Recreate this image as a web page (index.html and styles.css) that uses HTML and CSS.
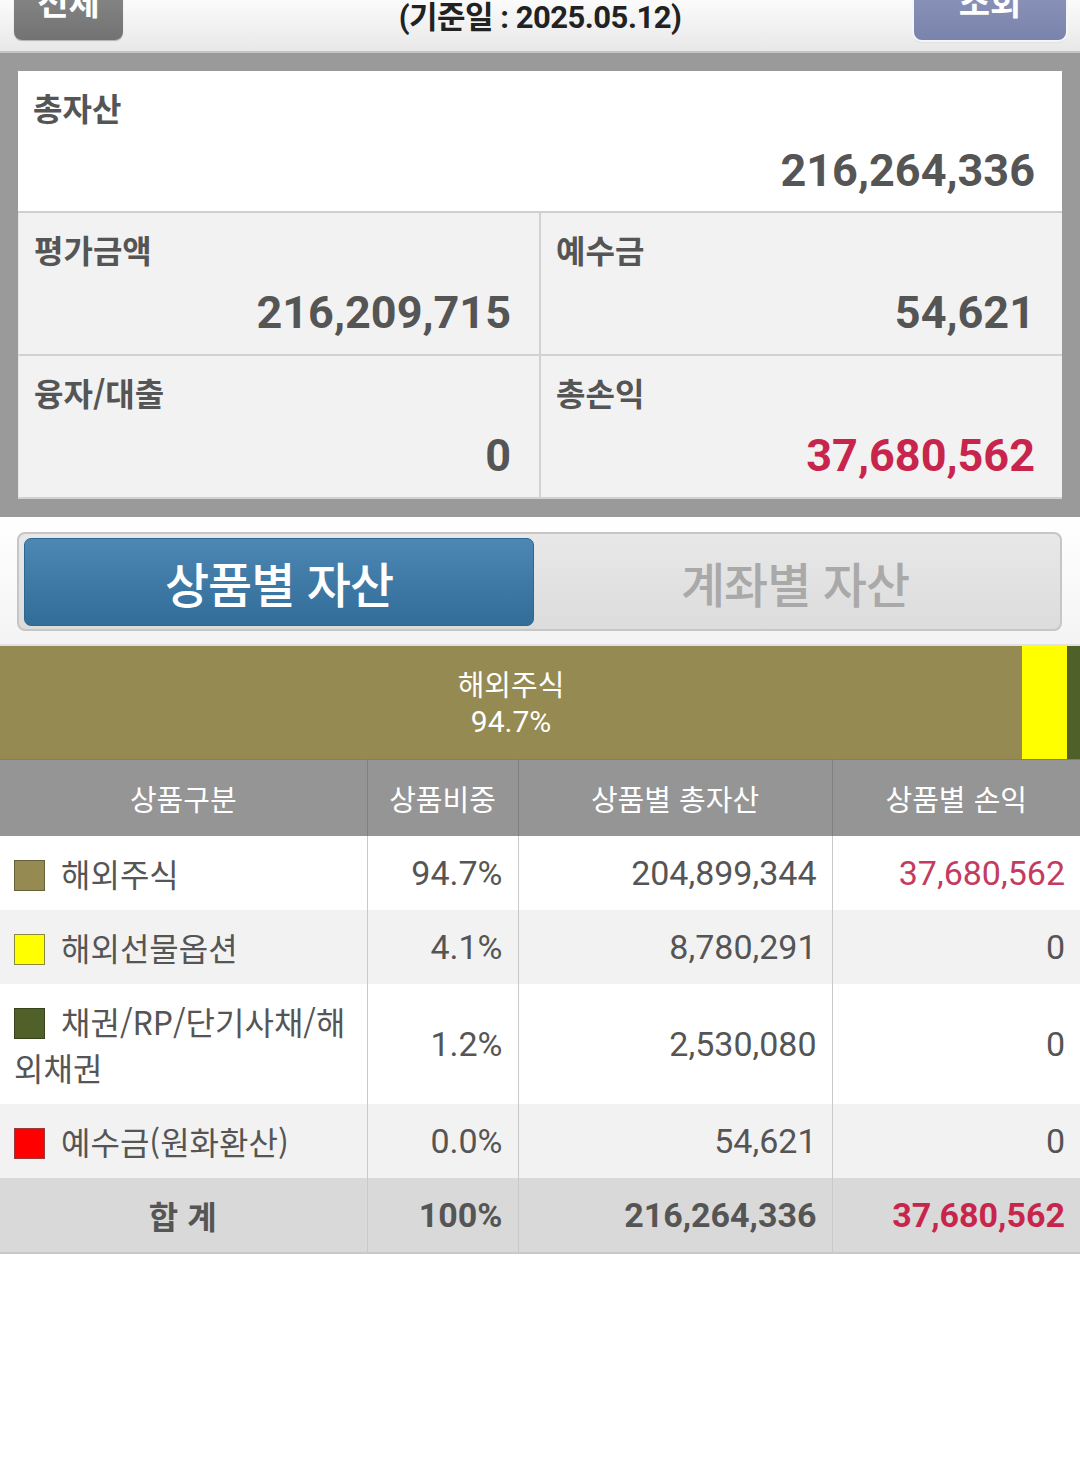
FILE: index.html
```html
<!DOCTYPE html>
<html lang="ko">
<head>
<meta charset="utf-8">
<title>자산현황</title>
<link rel="stylesheet" href="styles.css">
</head>
<body>
<div class="top-bar">
  <div class="btn btn-left"><span>전체</span></div>
  <div class="date">(기준일 : 2025.05.12)</div>
  <div class="btn btn-right"><span>조회</span></div>
</div>

<div class="summary-wrap">
  <div class="summary">
    <div class="total">
      <div class="label">총자산</div>
      <div class="value">216,264,336</div>
    </div>
    <div class="grid">
      <div class="cell cell-left">
        <div class="label">평가금액</div>
        <div class="value">216,209,715</div>
      </div>
      <div class="cell cell-right">
        <div class="label">예수금</div>
        <div class="value">54,621</div>
      </div>
      <div class="cell cell-left">
        <div class="label">융자/대출</div>
        <div class="value">0</div>
      </div>
      <div class="cell cell-right">
        <div class="label">총손익</div>
        <div class="value red">37,680,562</div>
      </div>
    </div>
  </div>
</div>

<div class="tab-wrap">
  <div class="tabs">
    <div class="tab tab-active">상품별 자산</div>
    <div class="tab tab-idle">계좌별 자산</div>
  </div>
</div>

<div class="bar">
  <div class="seg seg-olive" style="width:94.63%">
    <div class="seg-name">해외주식</div>
    <div class="seg-pct">94.7%</div>
  </div>
  <div class="seg seg-yellow" style="width:4.17%"></div>
  <div class="seg seg-green" style="width:1.2%"></div>
</div>

<table class="assets">
  <colgroup>
    <col class="c1"><col class="c2"><col class="c3"><col class="c4">
  </colgroup>
  <thead>
    <tr><th>상품구분</th><th>상품비중</th><th>상품별 총자산</th><th>상품별 손익</th></tr>
  </thead>
  <tbody>
    <tr class="r-white">
      <td class="name"><span class="sw sw-olive"></span>해외주식</td>
      <td class="num">94.7%</td>
      <td class="num">204,899,344</td>
      <td class="num red-light">37,680,562</td>
    </tr>
    <tr class="r-gray">
      <td class="name"><span class="sw sw-yellow"></span>해외선물옵션</td>
      <td class="num">4.1%</td>
      <td class="num">8,780,291</td>
      <td class="num">0</td>
    </tr>
    <tr class="r-white r-tall">
      <td class="name"><span class="sw sw-green"></span>채권/RP/단기사채/해<br>외채권</td>
      <td class="num">1.2%</td>
      <td class="num">2,530,080</td>
      <td class="num">0</td>
    </tr>
    <tr class="r-gray">
      <td class="name"><span class="sw sw-red"></span>예수금(원화환산)</td>
      <td class="num">0.0%</td>
      <td class="num">54,621</td>
      <td class="num">0</td>
    </tr>
    <tr class="r-total">
      <td class="sum-name">합 계</td>
      <td class="num">100%</td>
      <td class="num">216,264,336</td>
      <td class="num red">37,680,562</td>
    </tr>
  </tbody>
</table>
</body>
</html>
```

FILE: styles.css
```css
* { box-sizing: border-box; }

html, body {
  margin: 0;
  padding: 0;
  background: #ffffff;
  font-family: "Roboto", "Noto Sans CJK KR", sans-serif;
  color: #555555;
}

/* top bar */
.top-bar {
  height: 53px;
  display: grid;
  grid-template-columns: 1fr auto 1fr;
  align-items: start;
  padding: 0 14px;
  overflow: hidden;
  background: linear-gradient(#fbfbfb, #e8e8e8);
  border-bottom: 2px solid #c4c4c4;
}

.btn {
  margin-top: -22px;
  height: 62px;
  border-radius: 8px;
  color: #ffffff;
  font-family: "Noto Sans CJK KR", sans-serif;
  font-weight: 700;
  font-size: 34px;
  line-height: 46px;
  text-align: center;
}

.btn-left {
  justify-self: start;
  width: 109px;
  background: linear-gradient(#8c8c8c, #727272);
  box-shadow: 0 1px 1px rgba(0,0,0,0.25);
}

.btn-right {
  justify-self: end;
  width: 152px;
  background: linear-gradient(#8f97bd, #7a83ab);
  box-shadow: 0 0 0 2px #f4f6fb, 0 2px 2px rgba(0,0,0,0.15);
}

.date {
  font-weight: 700;
  font-size: 31px;
  line-height: 36px;
  color: #222222;
  letter-spacing: -0.5px;
}

/* summary */
.summary-wrap {
  background: #9a9a9a;
  padding: 18px 18px 18px 18px;
}

.summary {
  background: #ffffff;
}

.label {
  font-family: "Noto Sans CJK KR", sans-serif;
  font-weight: 700;
  font-size: 32px;
  line-height: 40px;
  color: #555555;
}

.value {
  margin-top: 16px;
  font-family: "Roboto", sans-serif;
  font-weight: 700;
  font-size: 45px;
  line-height: 56px;
  text-align: right;
  color: #555555;
}

.total {
  height: 142px;
  padding: 16px 27px 0 15px;
  border-bottom: 2px solid #cfcfcf;
}

.grid {
  display: grid;
  grid-template-columns: 523px 1fr;
  grid-auto-rows: 143px;
}

.cell {
  background: #f2f2f2;
  padding-top: 16px;
  padding-left: 15px;
  border-bottom: 2px solid #d2d2d2;
}

.cell-left {
  padding-right: 28px;
  border-right: 2px solid #d2d2d2;
  border-left: 1px solid #e4e4e4;
}

.cell-right {
  padding-right: 27px;
}

.value.red { color: #c8254d; }

/* tabs */
.tab-wrap {
  background: linear-gradient(#ffffff, #f4f4f4);
  padding: 15px 18px 13px 17px;
  border-bottom: 2px solid #e2e2e2;
}

.tabs {
  height: 99px;
  display: flex;
  padding: 4px 4px 3px 5px;
  border: 2px solid #c6c6c6;
  border-radius: 8px;
  background: linear-gradient(#e8e8e8, #dcdcdc);
}

.tab {
  display: flex;
  align-items: center;
  justify-content: center;
  font-family: "Noto Sans CJK KR", sans-serif;
  font-weight: 500;
  font-size: 48px;
  letter-spacing: -1px;
}

.tab-active {
  width: 510px;
  border-radius: 7px;
  color: #ffffff;
  background: linear-gradient(#4c87b5, #326d98);
  border: 1px solid #2f6690;
}

.tab-idle {
  flex: 1;
  color: #a9a9a9;
}

/* bar */
.bar {
  display: flex;
  height: 113px;
}

.seg-olive {
  background: #958a52;
  display: flex;
  flex-direction: column;
  align-items: center;
  justify-content: center;
  color: #ffffff;
}

.seg-name {
  font-family: "Noto Sans CJK KR", sans-serif;
  font-size: 29px;
  line-height: 38px;
}

.seg-pct {
  font-size: 30px;
  line-height: 40px;
}

.seg-yellow { background: #ffff00; }
.seg-green { background: #4f6128; }

/* table */
.assets {
  width: 1080px;
  border-collapse: collapse;
  table-layout: fixed;
}

.c1 { width: 367px; }
.c2 { width: 151px; }
.c3 { width: 314px; }
.c4 { width: 248px; }

.assets th {
  height: 76px;
  background: #959595;
  color: #ffffff;
  font-family: "Noto Sans CJK KR", sans-serif;
  font-weight: 400;
  font-size: 29px;
  border-top: 1px solid #7c7c7c;
  border-left: 1px solid #818181;
  border-right: 1px solid #818181;
  padding: 0;
}

.assets th:first-child { border-left: none; }
.assets th:last-child { border-right: none; }

.assets td {
  height: 74px;
  padding: 0 15px 0 14px;
  border-left: 1px solid #c9c9c9;
  border-right: 1px solid #c9c9c9;
  vertical-align: middle;
}

.assets td:first-child { border-left: none; }
.assets td:last-child { border-right: none; }

.r-white td { background: #ffffff; }
.r-gray td { background: #f2f2f2; }
.r-tall td { height: 120px; }

.r-total td {
  background: #d9d9d9;
  font-weight: 700;
  height: 75px;
  border-bottom: 2px solid #c9c9c9;
}

.name {
  font-family: "Noto Sans CJK KR", sans-serif;
  font-size: 32px;
  line-height: 46px;
  color: #555555;
}

.num {
  font-family: "Roboto", sans-serif;
  font-size: 34px;
  text-align: right;
  color: #555555;
}

.assets .num.red-light { color: #c33c60; }
.assets .num.red { color: #c8254d; }

.sum-name {
  font-family: "Noto Sans CJK KR", sans-serif;
  font-size: 32px;
  text-align: center;
  color: #555555;
}

.sw {
  display: inline-block;
  width: 31px;
  height: 31px;
  margin-right: 16px;
  vertical-align: -4px;
  border: 1px solid rgba(0,0,0,0.3);
}

.sw-olive { background: #958a52; }
.sw-yellow { background: #ffff00; border-color: #8c8a3c; }
.sw-green { background: #4f6128; }
.sw-red { background: #ff0000; border-color: #9c3a3a; }
```
